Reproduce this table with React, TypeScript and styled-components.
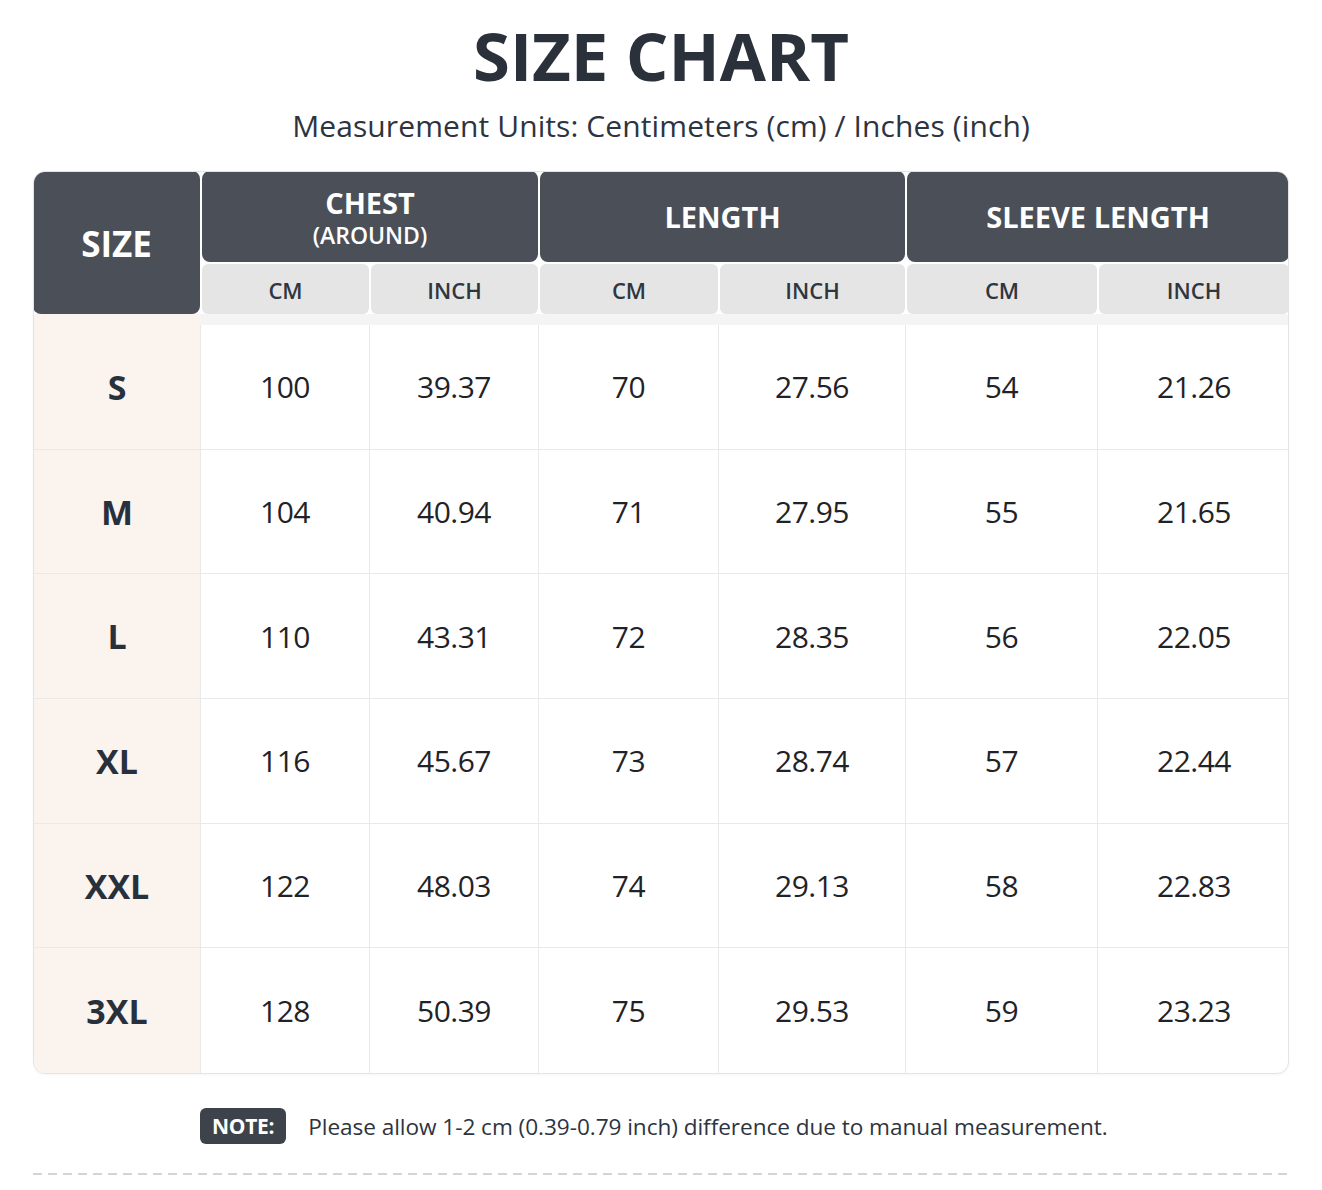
import React from "react";
import styled, { createGlobalStyle } from "styled-components";

const GlobalStyle = createGlobalStyle`
  html, body {
    margin: 0;
    padding: 0;
    background: #ffffff;
  }
  body {
    font-family: "Open Sans", "Noto Sans", "Liberation Sans", sans-serif;
    color: #2a313c;
  }
`;

const COLS = "167px 169px 169px 180px 187px 192px 192px";

const Page = styled.div`
  width: 1322px;
  padding: 20px 33px 0;
  box-sizing: border-box;
`;

const Title = styled.h1`
  margin: 0;
  font-size: 67px;
  line-height: 70px;
  font-weight: 700;
  text-align: center;
  color: #2b313b;
`;

const Subtitle = styled.p`
  margin: 19px 0 0;
  font-size: 30px;
  line-height: 34px;
  text-align: center;
  color: #2d3440;
  letter-spacing: 0.1px;
`;

const Table = styled.div`
  margin-top: 28px;
  border: 1px solid #e4e4e4;
  border-radius: 12px;
  overflow: hidden;
  background: #ffffff;
  box-shadow: 0 1px 3px rgba(0, 0, 0, 0.04);
`;

const Head = styled.div`
  display: grid;
  grid-template-columns: ${COLS};
  grid-template-rows: 91px 50px;
  row-gap: 2px;
  background: #ffffff;
  margin: -1px -1px 0;
`;

const SizeHead = styled.div`
  grid-row: 1 / span 2;
  background: #4a4f58;
  color: #ffffff;
  border-radius: 11px 8px 8px 8px;
  display: flex;
  align-items: center;
  justify-content: center;
  padding-top: 2px;
  font-size: 35px;
  font-weight: 700;
`;

const GroupHead = styled.div<{ $span: number; $last?: boolean }>`
  grid-column: span ${(p) => p.$span};
  margin-left: 2px;
  background: #4a4f58;
  color: #ffffff;
  border-radius: ${(p) => (p.$last ? "8px 11px 8px 8px" : "8px")};
  display: flex;
  flex-direction: column;
  align-items: center;
  justify-content: center;
  font-size: 29px;
  font-weight: 700;
  line-height: 36px;
`;

const GroupNote = styled.span`
  font-size: 23px;
  font-weight: 600;
  line-height: 28px;
`;

const UnitHead = styled.div`
  margin-left: 2px;
  background: #e5e5e5;
  border-radius: 6px;
  display: flex;
  align-items: center;
  justify-content: center;
  padding-top: 2px;
  font-size: 22px;
  font-weight: 600;
  color: #2f3640;
`;

const Band = styled.div`
  display: grid;
  grid-template-columns: ${COLS};
  height: 11px;
`;

const BandCell = styled.div<{ $peach?: boolean }>`
  background: ${(p) => (p.$peach ? "#faf3ee" : "#f4f4f4")};
`;

const Body = styled.div`
  display: grid;
  grid-template-columns: ${COLS};
  grid-auto-rows: 124.7px;
`;

const Cell = styled.div<{ $last?: boolean; $bottom?: boolean }>`
  display: flex;
  align-items: center;
  justify-content: center;
  border-right: ${(p) => (p.$last ? "none" : "1px solid #e9e9e9")};
  border-bottom: ${(p) => (p.$bottom ? "none" : "1px solid #e9e9e9")};
  font-size: 30px;
  letter-spacing: -0.5px;
  color: #1f2328;
`;

const SizeCell = styled(Cell)`
  background: #faf3ee;
  font-size: 34px;
  font-weight: 700;
  letter-spacing: 0;
  color: #28303c;
`;

const NoteRow = styled.div`
  display: flex;
  align-items: center;
  padding-left: 167px;
  margin-top: 34px;
  gap: 22px;
`;

const NoteBadge = styled.span`
  background: #3d424b;
  color: #ffffff;
  font-size: 21px;
  font-weight: 700;
  line-height: 36px;
  padding: 0 12px;
  border-radius: 6px;
  letter-spacing: -0.3px;
`;

const NoteText = styled.span`
  font-size: 22.6px;
  color: #2d3440;
  letter-spacing: -0.05px;
`;

const Divider = styled.div`
  margin-top: 29px;
  height: 2px;
  background: repeating-linear-gradient(
    to right,
    #d4d4d4 0,
    #d4d4d4 9px,
    transparent 9px,
    transparent 15px
  );
`;

const rows = [
  ["S", "100", "39.37", "70", "27.56", "54", "21.26"],
  ["M", "104", "40.94", "71", "27.95", "55", "21.65"],
  ["L", "110", "43.31", "72", "28.35", "56", "22.05"],
  ["XL", "116", "45.67", "73", "28.74", "57", "22.44"],
  ["XXL", "122", "48.03", "74", "29.13", "58", "22.83"],
  ["3XL", "128", "50.39", "75", "29.53", "59", "23.23"],
];

export default function App() {
  return (
    <Page>
      <GlobalStyle />
      <Title>SIZE CHART</Title>
      <Subtitle>Measurement Units: Centimeters (cm) / Inches (inch)</Subtitle>
      <Table>
        <Head>
          <SizeHead>SIZE</SizeHead>
          <GroupHead $span={2}>
            CHEST
            <GroupNote>(AROUND)</GroupNote>
          </GroupHead>
          <GroupHead $span={2}>LENGTH</GroupHead>
          <GroupHead $span={2} $last>
            SLEEVE LENGTH
          </GroupHead>
          {["CM", "INCH", "CM", "INCH", "CM", "INCH"].map((u, i) => (
            <UnitHead key={i}>{u}</UnitHead>
          ))}
        </Head>
        <Band>
          <BandCell $peach />
          {[0, 1, 2, 3, 4, 5].map((i) => (
            <BandCell key={i} />
          ))}
        </Band>
        <Body>
          {rows.map((r, ri) =>
            r.map((v, ci) =>
              ci === 0 ? (
                <SizeCell key={`${ri}-${ci}`} $bottom={ri === rows.length - 1}>
                  {v}
                </SizeCell>
              ) : (
                <Cell
                  key={`${ri}-${ci}`}
                  $last={ci === r.length - 1}
                  $bottom={ri === rows.length - 1}
                >
                  {v}
                </Cell>
              )
            )
          )}
        </Body>
      </Table>
      <NoteRow>
        <NoteBadge>NOTE:</NoteBadge>
        <NoteText>
          Please allow 1-2 cm (0.39-0.79 inch) difference due to manual
          measurement.
        </NoteText>
      </NoteRow>
      <Divider />
    </Page>
  );
}
